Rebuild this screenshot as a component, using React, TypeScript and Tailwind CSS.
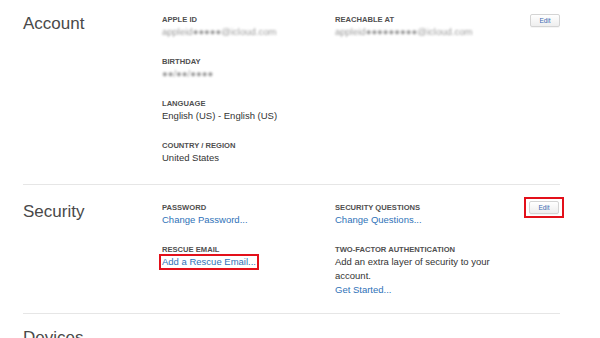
import React from "react";

const font = { fontFamily: '"Liberation Sans", Arial, sans-serif' };

function Label({ children }: { children: React.ReactNode }) {
  return (
    <div className="text-[7.6px] leading-[11px] font-bold uppercase text-[#505050]">{children}</div>
  );
}

function Value({ children }: { children: React.ReactNode }) {
  return <div className="text-[9.5px] leading-[14px] text-[#333]">{children}</div>;
}

function Blurred({ children }: { children: React.ReactNode }) {
  return (
    <div className="text-[9.5px] leading-[14px] text-[#9a9a9a] blur-[1.2px] select-none">{children}</div>
  );
}

function LinkText({ children }: { children: React.ReactNode }) {
  return <div className="text-[9.5px] leading-[14px] text-[#2f72b8]">{children}</div>;
}

function EditButton({ highlighted }: { highlighted?: boolean }) {
  const btn = (
    <button className="block w-[30px] h-[13px] rounded-[2px] border border-[#d4d4d4] bg-gradient-to-b from-white to-[#eeeeee] text-[6.5px] leading-[11px] text-[#3d6bb3] shadow-[0_1px_0_rgba(0,0,0,0.04)]">
      Edit
    </button>
  );
  if (highlighted) {
    return <div className="border-2 border-[#e3101a] px-[3px] pt-[2px] pb-[2px] flex -mt-[5px] -mr-[4px]">{btn}</div>;
  }
  return btn;
}

export default function App() {
  return (
    <div className="w-[600px] h-[338px] bg-white overflow-hidden" style={font}>
      <div className="ml-[23px] w-[537px]">
        {/* Account */}
        <section className="flex pt-[14px] pb-[19px] border-b border-[#e6e6e6]">
          <h2 className="w-[139px] text-[17px] leading-[22px] text-[#494949] -mt-[1px]">Account</h2>
          <div className="flex-1 flex">
            <div className="w-[173px] flex flex-col gap-[17px]">
              <div>
                <Label>Apple ID</Label>
                <Blurred>appleid●●●●●@icloud.com</Blurred>
              </div>
              <div>
                <Label>Birthday</Label>
                <Blurred>●●/●●/●●●●</Blurred>
              </div>
              <div>
                <Label>Language</Label>
                <Value>English (US) - English (US)</Value>
              </div>
              <div>
                <Label>Country / Region</Label>
                <Value>United States</Value>
              </div>
            </div>
            <div className="flex-1 flex flex-col">
              <Label>Reachable at</Label>
              <Blurred>appleid●●●●●●●●●@icloud.com</Blurred>
            </div>
            <div className="flex flex-col">
              <EditButton />
            </div>
          </div>
        </section>

        {/* Security */}
        <section className="flex pt-[17px] pb-[16px] border-b border-[#e6e6e6]">
          <h2 className="w-[139px] text-[17px] leading-[22px] text-[#494949] -mt-[1px]">Security</h2>
          <div className="flex-1 flex">
            <div className="w-[173px] flex flex-col gap-[17px]">
              <div>
                <Label>Password</Label>
                <LinkText>Change Password...</LinkText>
              </div>
              <div>
                <Label>Rescue Email</Label>
                <div className="-ml-[3px] -mt-[1px] w-fit border-2 border-[#e3101a] px-[1px] leading-none">
                  <div className="text-[9.5px] leading-[12px] text-[#2f72b8]">Add a Rescue Email...</div>
                </div>
              </div>
            </div>
            <div className="flex-1 flex flex-col gap-[17px]">
              <div>
                <Label>Security Questions</Label>
                <LinkText>Change Questions...</LinkText>
              </div>
              <div>
                <Label>Two-Factor Authentication</Label>
                <Value>
                  Add an extra layer of security to your
                  <br />
                  account.
                </Value>
                <LinkText>Get Started...</LinkText>
              </div>
            </div>
            <div>
              <EditButton highlighted />
            </div>
          </div>
        </section>

        {/* Devices */}
        <section className="flex pt-[13px]">
          <h2 className="w-[139px] text-[17px] leading-[22px] text-[#494949]">Devices</h2>
        </section>
      </div>
    </div>
  );
}
